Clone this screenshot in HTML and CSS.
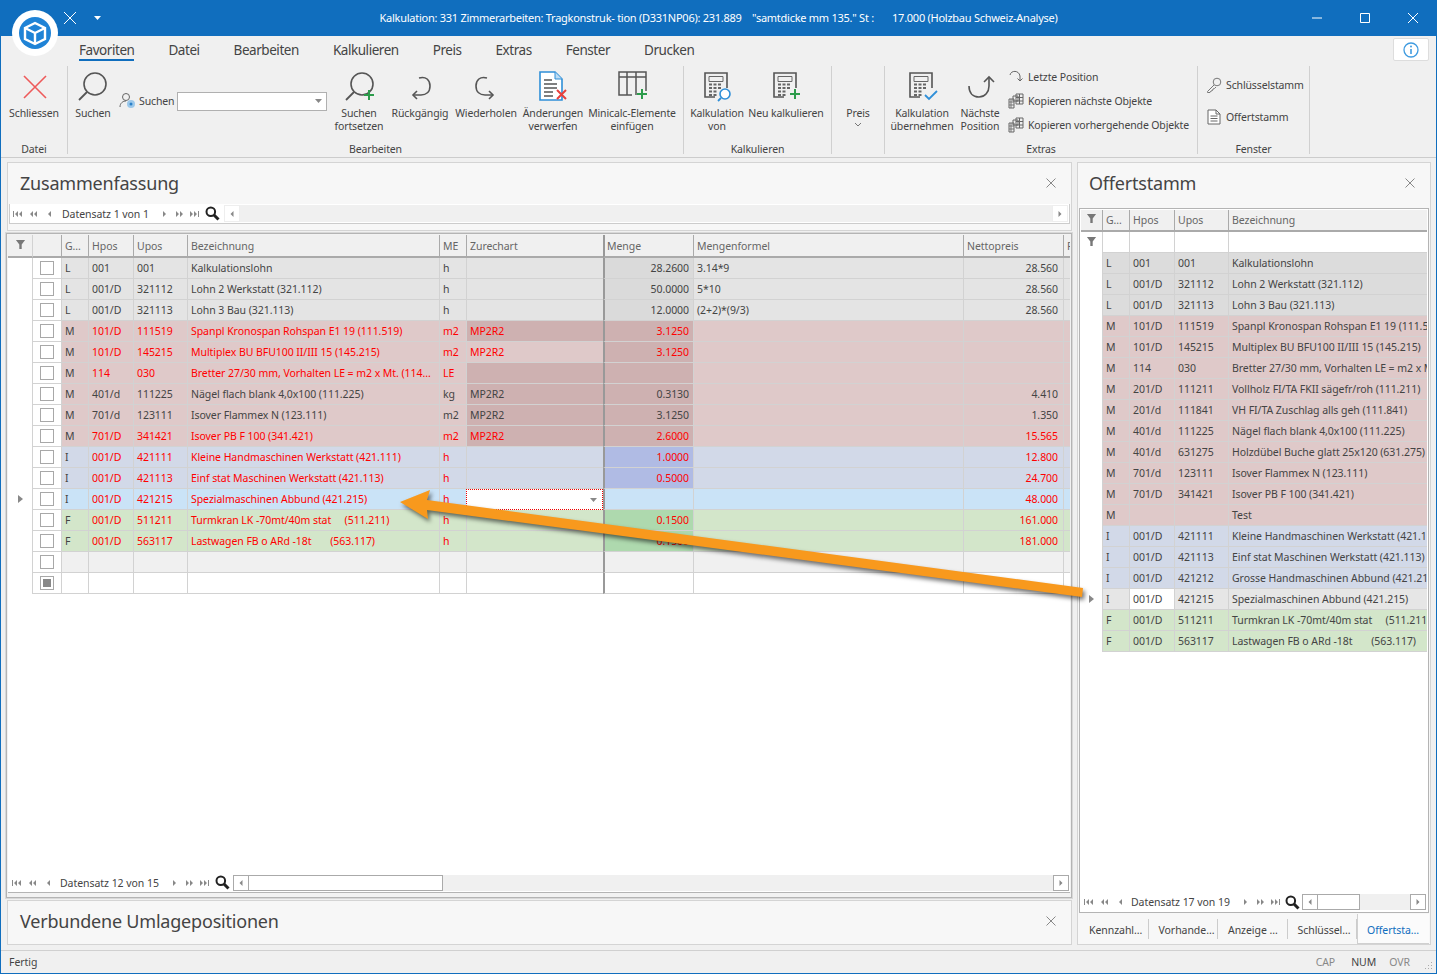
FILE: index.html
```html
<!DOCTYPE html>
<html lang="de">
  <head>
    <meta charset="UTF-8" />
    <meta name="viewport" content="width=device-width, initial-scale=1.0" />
    <title>Kalkulation</title>
    <link rel="stylesheet" href="styles.css">
  </head>

  <body>
    <svg class="defs" width="0" height="0">
      <symbol id="i-funnel" viewBox="0 0 12 12"><path d="M1 1h10L7.3 6v5H4.7V6z" fill="#777"/></symbol>
      <symbol id="i-first" viewBox="0 0 10 8"><path d="M1 1v6" stroke="#888" fill="none"/><path d="M5.5 1v6L2.5 4zM9.5 1v6L6.5 4z" fill="#888"/></symbol>
      <symbol id="i-prevp" viewBox="0 0 10 8"><path d="M4.5 1v6L1.5 4zM8.5 1v6L5.5 4z" fill="#888"/></symbol>
      <symbol id="i-prev" viewBox="0 0 10 8"><path d="M6.5 1v6L3.5 4z" fill="#888"/></symbol>
      <symbol id="i-next" viewBox="0 0 10 8"><path d="M3.5 1v6L6.5 4z" fill="#888"/></symbol>
      <symbol id="i-nextp" viewBox="0 0 10 8"><path d="M1.5 1v6L4.5 4zM5.5 1v6L8.5 4z" fill="#888"/></symbol>
      <symbol id="i-last" viewBox="0 0 10 8"><path d="M.5 1v6L3.5 4zM4.5 1v6L7.5 4z" fill="#888"/><path d="M9 1v6" stroke="#888" fill="none"/></symbol>
      <symbol id="i-mag" viewBox="0 0 15 15"><circle cx="5.8" cy="5.8" r="4.3" fill="none" stroke="#222" stroke-width="2"/><path d="M9 9l4.5 4.5" stroke="#222" stroke-width="3"/></symbol>
      <symbol id="i-calc" viewBox="0 0 32 32">
        <path d="M14 27H4V3h22v15" fill="none" stroke="#555" stroke-width="1.6"/>
        <path d="M8 6.5h14v5H8z" fill="none" stroke="#666"/>
        <path d="M8 14.5h3M12.5 14.5h3M17 14.5h3M8 18h3M12.5 18h3M17 18h3M8 21.5h3M12.5 21.5h3M8 25h3M12.5 25h3" stroke="#666" stroke-width="2"/>
      </symbol>
      <symbol id="i-undo" viewBox="0 0 32 32">
        <path d="M15 8c7-2 11 2 11 8 0 6-4 9-9 9H9" fill="none" stroke="#555" stroke-width="1.6"/>
        <path d="M13 21l-4 4 4 4" fill="none" stroke="#555" stroke-width="1.6"/>
      </symbol>
      <symbol id="i-copy" viewBox="0 0 16 16">
        <path d="M1 6h5v9H1zM5 3h5v5H5zM8 1h7v10H8z" fill="#eee" stroke="#666"/>
        <path d="M8 4.500h7M11.500 1v10M8 8h7" stroke="#666" fill="none"/>
        <path d="M3 6v9M1 9h5M1 12h5" stroke="#777" fill="none"/>
      </symbol>
    </svg>

    <div class="app">
      <header class="titlebar">
        <div class="qat">
          <svg width="14" height="14" viewBox="0 0 14 14"><path d="M1 1l12 12M13 1L1 13" stroke="#fff" fill="none"/></svg>
          <svg class="qat-drop" width="7" height="4" viewBox="0 0 7 4"><path d="M0 0h7L3.500 4z" fill="#fff"/></svg>
        </div>
        <div class="title">Kalkulation: 331 Zimmerarbeiten: Tragkonstruk- tion (D331NP06): 231.889    "samtdicke mm 135." St :       17.000 (Holzbau Schweiz-Analyse)</div>
        <div class="winbtns">
          <span class="winbtn"><svg width="12" height="12" viewBox="0 0 12 12"><path d="M1 6h10" stroke="#fff" fill="none"/></svg></span>
          <span class="winbtn"><svg width="12" height="12" viewBox="0 0 12 12"><path d="M1.500 1.500h9v9h-9z" stroke="#fff" fill="none"/></svg></span>
          <span class="winbtn"><svg width="12" height="12" viewBox="0 0 12 12"><path d="M1 1l10 10M11 1L1 11" stroke="#fff" fill="none"/></svg></span>
        </div>
      </header>

      <div class="logo">
        <svg width="46" height="46" viewBox="0 0 46 46">
          <circle cx="23" cy="23" r="23" fill="#fff"/>
          <circle cx="23" cy="23" r="16" fill="#1f83d6"/>
          <path d="M23 13l10 5v11l-10 5-10-5V18z" fill="none" stroke="#fff" stroke-width="2.400"/>
          <path d="M13 18l10 5 10-5M23 23v11" fill="none" stroke="#fff" stroke-width="2.400"/>
        </svg>
      </div>

      <nav class="tabs">
        <span class="tab active">Favoriten</span>
        <span class="tab">Datei</span>
        <span class="tab">Bearbeiten</span>
        <span class="tab">Kalkulieren</span>
        <span class="tab">Preis</span>
        <span class="tab">Extras</span>
        <span class="tab">Fenster</span>
        <span class="tab">Drucken</span>
        <span class="info">
          <svg width="16" height="16" viewBox="0 0 16 16"><circle cx="8" cy="8" r="7" fill="none" stroke="#3f9be0" stroke-width="1.300"/><path d="M8 7v5" stroke="#3f9be0" stroke-width="1.600"/><circle cx="8" cy="4.600" r="1" fill="#3f9be0"/></svg>
        </span>
      </nav>

      <div class="ribbon">
        <section class="group g-datei">
          <div class="items">
            <div class="rb w-66">
              <div class="rb-icon"><svg width="32" height="32" viewBox="0 0 32 32"><path d="M6 6l22 22M28 6L6 28" stroke="#ee5a5a" stroke-width="1.600" fill="none"/></svg></div>
              <div class="rb-label">Schliessen</div>
            </div>
          </div>
          <div class="group-name">Datei</div>
        </section>

        <section class="group g-bearb">
          <div class="items">
            <div class="rb w-50">
              <div class="rb-icon"><svg width="32" height="32" viewBox="0 0 32 32"><circle cx="18" cy="14" r="11" fill="none" stroke="#555" stroke-width="1.600"/><path d="M10 22l-8 8" stroke="#555" stroke-width="1.800"/></svg></div>
              <div class="rb-label">Suchen</div>
            </div>
            <div class="searchbox">
              <svg width="17" height="18" viewBox="0 0 17 18"><circle cx="7" cy="5" r="3.500" fill="none" stroke="#666"/><path d="M1 15c0-4 3-6 6-6" fill="none" stroke="#666"/><circle cx="12" cy="12" r="4" fill="#9cc8ea"/><circle cx="12" cy="12" r="1.500" fill="#2a80c8"/></svg>
              <span class="sb-label">Suchen</span>
              <span class="combo"><svg width="7" height="4" viewBox="0 0 7 4"><path d="M0 0h7L3.500 4z" fill="#888"/></svg></span>
            </div>
            <div class="rb w-58">
              <div class="rb-icon"><svg width="32" height="32" viewBox="0 0 32 32"><circle cx="19" cy="14" r="11" fill="none" stroke="#555" stroke-width="1.600"/><path d="M11 22l-8 8" stroke="#555" stroke-width="1.800"/><path d="M26 20v10M21 25h10" stroke="#2c9c4b" stroke-width="2"/></svg></div>
              <div class="rb-label">Suchen<br>fortsetzen</div>
            </div>
            <div class="rb w-64">
              <div class="rb-icon"><svg width="32" height="32"><use href="#i-undo"/></svg></div>
              <div class="rb-label">Rückgängig</div>
            </div>
            <div class="rb w-68">
              <div class="rb-icon"><svg class="flip" width="32" height="32"><use href="#i-undo"/></svg></div>
              <div class="rb-label">Wiederholen</div>
            </div>
            <div class="rb w-66">
              <div class="rb-icon"><svg width="32" height="32" viewBox="0 0 32 32"><path d="M3 2h15l7 7v21H3z" fill="#fff" stroke="#2f8fd8" stroke-width="1.600"/><path d="M18 2v7h7" fill="#bcdcf4" stroke="#2f8fd8"/><path d="M7 10h8M7 14h13M7 18h13M7 22h9M7 26h9" stroke="#555" stroke-width="1.300"/><path d="M20 20l9 9M29 20l-9 9" stroke="#e8403c" stroke-width="2"/></svg></div>
              <div class="rb-label">Änderungen<br>verwerfen</div>
            </div>
            <div class="rb w-92">
              <div class="rb-icon"><svg width="32" height="32" viewBox="0 0 32 32"><path d="M16 25H3V2h27v19" fill="none" stroke="#555" stroke-width="1.500"/><path d="M3 7h27M11 2v23M20 2v23" fill="none" stroke="#555" stroke-width="1.500"/><path d="M26 19v10M21 24h10" stroke="#2c9c4b" stroke-width="2"/></svg></div>
              <div class="rb-label">Minicalc-Elemente<br>einfügen</div>
            </div>
          </div>
          <div class="group-name">Bearbeiten</div>
        </section>

        <section class="group g-kalk">
          <div class="items">
            <div class="rb w-62">
              <div class="rb-icon"><svg width="32" height="32" viewBox="0 0 32 32"><use href="#i-calc"/><circle cx="24" cy="24" r="5" fill="#fff" stroke="#2f8fd8" stroke-width="1.600"/><path d="M20 28l-3 3" stroke="#2f8fd8" stroke-width="1.800"/></svg></div>
              <div class="rb-label">Kalkulation<br>von</div>
            </div>
            <div class="rb w-76">
              <div class="rb-icon"><svg width="32" height="32" viewBox="0 0 32 32"><use href="#i-calc"/><path d="M25 19v10M20 24h10" stroke="#2c9c4b" stroke-width="2"/></svg></div>
              <div class="rb-label">Neu kalkulieren</div>
            </div>
          </div>
          <div class="group-name">Kalkulieren</div>
        </section>

        <section class="group g-preis">
          <div class="items">
            <div class="rb w-52">
              <div class="rb-icon"></div>
              <div class="rb-label">Preis</div>
              <svg class="chev" width="8" height="5" viewBox="0 0 8 5"><path d="M1 1l3 3 3-3" fill="none" stroke="#777"/></svg>
            </div>
          </div>
        </section>

        <section class="group g-extras">
          <div class="items">
            <div class="rb w-64">
              <div class="rb-icon"><svg width="32" height="32" viewBox="0 0 32 32"><use href="#i-calc"/><path d="M19 25l4 4 8-8" fill="none" stroke="#2f8fd8" stroke-width="1.800"/></svg></div>
              <div class="rb-label">Kalkulation<br>übernehmen</div>
            </div>
            <div class="rb w-52">
              <div class="rb-icon"><svg width="32" height="32" viewBox="0 0 32 32"><path d="M5 16c0 7 4 11 10 11s10-5 10-11V7" fill="none" stroke="#555" stroke-width="1.600"/><path d="M20 12l5-5 5 5" fill="none" stroke="#555" stroke-width="1.600"/></svg></div>
              <div class="rb-label">Nächste<br>Position</div>
            </div>
            <div class="rb-list">
              <div class="rb-line"><svg width="16" height="16" viewBox="0 0 16 16"><path d="M2 6c1-5 9-5 10 1v5" fill="none" stroke="#666"/><path d="M9.500 9.500L12 12l2.500-2.500" fill="none" stroke="#666"/></svg>Letzte Position</div>
              <div class="rb-line"><svg width="16" height="16"><use href="#i-copy"/></svg>Kopieren nächste Objekte</div>
              <div class="rb-line"><svg width="16" height="16"><use href="#i-copy"/></svg>Kopieren vorhergehende Objekte</div>
            </div>
          </div>
          <div class="group-name">Extras</div>
        </section>

        <section class="group g-fenster">
          <div class="items">
            <div class="rb-list wide">
              <div class="rb-line"><svg width="16" height="16" viewBox="0 0 16 16"><circle cx="11" cy="5" r="3.800" fill="none" stroke="#777"/><path d="M8 8l-6.500 6.500v1h2.500l1-1.500 1.500-.5.500-1.500 1.500-.5 1.500-1.500" fill="none" stroke="#777"/></svg>Schlüsselstamm</div>
              <div class="rb-line"><svg width="16" height="16" viewBox="0 0 16 16"><path d="M2 1h8l4 4v10H2z" fill="#fff" stroke="#666"/><path d="M10 1v4h4M4.500 7h7M4.500 9.500h7M4.500 12h7" fill="none" stroke="#666"/></svg>Offertstamm</div>
            </div>
          </div>
          <div class="group-name">Fenster</div>
        </section>
      </div>

      <main class="main">
        <div class="col-left">
          <section class="panel panel-top">
            <div class="panel-head">
              <h2>Zusammenfassung</h2>
              <svg width="10" height="10" viewBox="0 0 10 10"><path d="M.5.500l9 9M9.500.500l-9 9" stroke="#888" fill="none"/></svg>
            </div>
            <div class="navbar nav-top">
              <span class="navbtns">
                <svg width="15" height="8"><use href="#i-first"/></svg><svg width="15" height="8"><use href="#i-prevp"/></svg><svg width="15" height="8"><use href="#i-prev"/></svg>
              </span>
              <span class="navtext">Datensatz 1 von 1</span>
              <span class="navbtns">
                <svg width="15" height="8"><use href="#i-next"/></svg><svg width="15" height="8"><use href="#i-nextp"/></svg><svg width="15" height="8"><use href="#i-last"/></svg>
              </span>
              <svg class="mag" width="15" height="15"><use href="#i-mag"/></svg>
              <span class="hscroll disabled"><span class="sbtn"><svg width="15" height="8"><use href="#i-prev"/></svg></span><span class="track"></span><span class="sbtn"><svg width="15" height="8"><use href="#i-next"/></svg></span></span>
            </div>
          </section>

          <section class="gridframe">
            <div class="gridwrap">
              <table class="grid grid-main">
                <colgroup>
                  <col class="c-ind"><col class="c-chk"><col class="c-g"><col class="c-hpos"><col class="c-upos"><col class="c-bez"><col class="c-me"><col class="c-zur"><col class="c-menge"><col class="c-formel"><col class="c-netto"><col class="c-p">
                </colgroup>
                <thead>
                  <tr>
                    <th class="ind"><svg width="11" height="11"><use href="#i-funnel"/></svg></th>
                    <th></th><th>G...</th><th>Hpos</th><th>Upos</th><th>Bezeichnung</th><th>ME</th><th>Zurechart</th><th class="mg">Menge</th><th>Mengenformel</th><th>Nettopreis</th><th>P</th>
                  </tr>
                </thead>
                <tbody>
                  <tr class="r-l"><td class="ind"></td><td class="chk"><i class="box"></i></td><td>L</td><td>001</td><td>001</td><td>Kalkulationslohn</td><td>h</td><td></td><td class="mg num hi">28.2600</td><td>3.14*9</td><td class="num2">28.560</td><td></td></tr>
                  <tr class="r-l"><td class="ind"></td><td class="chk"><i class="box"></i></td><td>L</td><td>001/D</td><td>321112</td><td>Lohn 2 Werkstatt (321.112)</td><td>h</td><td></td><td class="mg num hi">50.0000</td><td>5*10</td><td class="num2">28.560</td><td></td></tr>
                  <tr class="r-l"><td class="ind"></td><td class="chk"><i class="box"></i></td><td>L</td><td>001/D</td><td>321113</td><td>Lohn 3 Bau (321.113)</td><td>h</td><td></td><td class="mg num hi">12.0000</td><td>(2+2)*(9/3)</td><td class="num2">28.560</td><td></td></tr>
                  <tr class="r-m red"><td class="ind"></td><td class="chk"><i class="box"></i></td><td class="g">M</td><td>101/D</td><td>111519</td><td>Spanpl Kronospan Rohspan E1 19 (111.519)</td><td>m2</td><td class="hi">MP2R2</td><td class="mg num hi">3.1250</td><td></td><td class="num2"></td><td></td></tr>
                  <tr class="r-m red"><td class="ind"></td><td class="chk"><i class="box"></i></td><td class="g">M</td><td>101/D</td><td>145215</td><td>Multiplex BU BFU100 II/III 15 (145.215)</td><td>m2</td><td>MP2R2</td><td class="mg num hi">3.1250</td><td></td><td class="num2"></td><td></td></tr>
                  <tr class="r-m red"><td class="ind"></td><td class="chk"><i class="box"></i></td><td class="g">M</td><td>114</td><td>030</td><td>Bretter 27/30 mm, Vorhalten LE = m2 x Mt. (114...</td><td>LE</td><td class="hi"></td><td class="mg num hi"></td><td></td><td class="num2"></td><td></td></tr>
                  <tr class="r-m"><td class="ind"></td><td class="chk"><i class="box"></i></td><td>M</td><td>401/d</td><td>111225</td><td>Nägel flach blank 4,0x100 (111.225)</td><td>kg</td><td class="hi">MP2R2</td><td class="mg num hi">0.3130</td><td></td><td class="num2">4.410</td><td></td></tr>
                  <tr class="r-m"><td class="ind"></td><td class="chk"><i class="box"></i></td><td>M</td><td>701/d</td><td>123111</td><td>Isover Flammex N (123.111)</td><td>m2</td><td class="hi">MP2R2</td><td class="mg num hi">3.1250</td><td></td><td class="num2">1.350</td><td></td></tr>
                  <tr class="r-m red"><td class="ind"></td><td class="chk"><i class="box"></i></td><td class="g">M</td><td>701/D</td><td>341421</td><td>Isover PB F 100 (341.421)</td><td>m2</td><td class="hi">MP2R2</td><td class="mg num hi">2.6000</td><td></td><td class="num2">15.565</td><td></td></tr>
                  <tr class="r-i red"><td class="ind"></td><td class="chk"><i class="box"></i></td><td class="g">I</td><td>001/D</td><td>421111</td><td>Kleine Handmaschinen Werkstatt (421.111)</td><td>h</td><td></td><td class="mg num hi">1.0000</td><td></td><td class="num2">12.800</td><td></td></tr>
                  <tr class="r-i red"><td class="ind"></td><td class="chk"><i class="box"></i></td><td class="g">I</td><td>001/D</td><td>421113</td><td>Einf stat Maschinen Werkstatt (421.113)</td><td>h</td><td></td><td class="mg num hi">0.5000</td><td></td><td class="num2">24.700</td><td></td></tr>
                  <tr class="r-s red"><td class="ind"><i class="cursor"></i></td><td class="chk"><i class="box"></i></td><td class="g">I</td><td>001/D</td><td>421215</td><td>Spezialmaschinen Abbund (421.215)</td><td>h</td><td class="editor"><svg width="7" height="4" viewBox="0 0 7 4"><path d="M0 0h7L3.500 4z" fill="#888"/></svg></td><td class="mg num"></td><td></td><td class="num2">48.000</td><td></td></tr>
                  <tr class="r-f red"><td class="ind"></td><td class="chk"><i class="box"></i></td><td class="g">F</td><td>001/D</td><td>511211</td><td>Turmkran LK -70mt/40m stat     (511.211)</td><td>h</td><td></td><td class="mg num hi">0.1500</td><td></td><td class="num2">161.000</td><td></td></tr>
                  <tr class="r-f red"><td class="ind"></td><td class="chk"><i class="box"></i></td><td class="g">F</td><td>001/D</td><td>563117</td><td>Lastwagen FB o ARd -18t       (563.117)</td><td>h</td><td></td><td class="mg num hi">0.1500</td><td></td><td class="num2">181.000</td><td></td></tr>
                  <tr class="r-e"><td class="ind"></td><td class="chk"><i class="box"></i></td><td></td><td></td><td></td><td></td><td></td><td></td><td class="mg"></td><td></td><td></td><td></td></tr>
                  <tr class="r-w"><td class="ind"></td><td class="chk"><i class="box mixed"></i></td><td></td><td></td><td></td><td></td><td></td><td></td><td class="mg"></td><td></td><td></td><td></td></tr>
                </tbody>
              </table>
            </div>
            <div class="navbar nav-bottom">
              <span class="navbtns">
                <svg width="15" height="8"><use href="#i-first"/></svg><svg width="15" height="8"><use href="#i-prevp"/></svg><svg width="15" height="8"><use href="#i-prev"/></svg>
              </span>
              <span class="navtext">Datensatz 12 von 15</span>
              <span class="navbtns">
                <svg width="15" height="8"><use href="#i-next"/></svg><svg width="15" height="8"><use href="#i-nextp"/></svg><svg width="15" height="8"><use href="#i-last"/></svg>
              </span>
              <svg class="mag" width="15" height="15"><use href="#i-mag"/></svg>
              <span class="hscroll"><span class="sbtn"><svg width="15" height="8"><use href="#i-prev"/></svg></span><span class="thumb thumb-main"></span><span class="track"></span><span class="sbtn"><svg width="15" height="8"><use href="#i-next"/></svg></span></span>
            </div>
          </section>

          <section class="panel panel-umlage">
            <div class="panel-head">
              <h2>Verbundene Umlagepositionen</h2>
              <svg width="10" height="10" viewBox="0 0 10 10"><path d="M.5.500l9 9M9.500.500l-9 9" stroke="#888" fill="none"/></svg>
            </div>
          </section>
        </div>

        <section class="panel col-right">
          <div class="panel-head">
            <h2>Offertstamm</h2>
            <svg width="10" height="10" viewBox="0 0 10 10"><path d="M.5.500l9 9M9.500.500l-9 9" stroke="#888" fill="none"/></svg>
          </div>
          <div class="gridframe frame-right">
            <div class="gridwrap">
              <table class="grid grid-side">
                <colgroup>
                  <col class="s-ind"><col class="c-g"><col class="c-hpos"><col class="c-upos"><col class="s-bez">
                </colgroup>
                <thead>
                  <tr><th class="ind"><svg width="11" height="11"><use href="#i-funnel"/></svg></th><th>G...</th><th>Hpos</th><th>Upos</th><th>Bezeichnung</th></tr>
                </thead>
                <tbody>
                  <tr class="r-w"><td class="ind"><svg width="11" height="11"><use href="#i-funnel"/></svg></td><td></td><td></td><td></td><td></td></tr>
                  <tr class="r-l2"><td class="ind"></td><td>L</td><td>001</td><td>001</td><td>Kalkulationslohn</td></tr>
                  <tr class="r-l2"><td class="ind"></td><td>L</td><td>001/D</td><td>321112</td><td>Lohn 2 Werkstatt (321.112)</td></tr>
                  <tr class="r-l2"><td class="ind"></td><td>L</td><td>001/D</td><td>321113</td><td>Lohn 3 Bau (321.113)</td></tr>
                  <tr class="r-m"><td class="ind"></td><td>M</td><td>101/D</td><td>111519</td><td>Spanpl Kronospan Rohspan E1 19 (111.519)</td></tr>
                  <tr class="r-m"><td class="ind"></td><td>M</td><td>101/D</td><td>145215</td><td>Multiplex BU BFU100 II/III 15 (145.215)</td></tr>
                  <tr class="r-m"><td class="ind"></td><td>M</td><td>114</td><td>030</td><td>Bretter 27/30 mm, Vorhalten LE = m2 x Mt.</td></tr>
                  <tr class="r-m"><td class="ind"></td><td>M</td><td>201/D</td><td>111211</td><td>Vollholz FI/TA FKII sägefr/roh (111.211)</td></tr>
                  <tr class="r-m"><td class="ind"></td><td>M</td><td>201/d</td><td>111841</td><td>VH FI/TA Zuschlag alls geh (111.841)</td></tr>
                  <tr class="r-m"><td class="ind"></td><td>M</td><td>401/d</td><td>111225</td><td>Nägel flach blank 4,0x100 (111.225)</td></tr>
                  <tr class="r-m"><td class="ind"></td><td>M</td><td>401/d</td><td>631275</td><td>Holzdübel Buche glatt 25x120 (631.275)</td></tr>
                  <tr class="r-m"><td class="ind"></td><td>M</td><td>701/d</td><td>123111</td><td>Isover Flammex N (123.111)</td></tr>
                  <tr class="r-m"><td class="ind"></td><td>M</td><td>701/D</td><td>341421</td><td>Isover PB F 100 (341.421)</td></tr>
                  <tr class="r-m"><td class="ind"></td><td>M</td><td></td><td></td><td>Test</td></tr>
                  <tr class="r-i"><td class="ind"></td><td>I</td><td>001/D</td><td>421111</td><td>Kleine Handmaschinen Werkstatt (421.111)</td></tr>
                  <tr class="r-i"><td class="ind"></td><td>I</td><td>001/D</td><td>421113</td><td>Einf stat Maschinen Werkstatt (421.113)</td></tr>
                  <tr class="r-i"><td class="ind"></td><td>I</td><td>001/D</td><td>421212</td><td>Grosse Handmaschinen Abbund (421.212)</td></tr>
                  <tr class="r-cur"><td class="ind"><i class="cursor"></i></td><td>I</td><td class="focus">001/D</td><td>421215</td><td>Spezialmaschinen Abbund (421.215)</td></tr>
                  <tr class="r-f"><td class="ind"></td><td>F</td><td>001/D</td><td>511211</td><td>Turmkran LK -70mt/40m stat     (511.211)</td></tr>
                  <tr class="r-f"><td class="ind"></td><td>F</td><td>001/D</td><td>563117</td><td>Lastwagen FB o ARd -18t       (563.117)</td></tr>
                </tbody>
              </table>
            </div>
            <div class="navbar nav-side">
              <span class="navbtns">
                <svg width="15" height="8"><use href="#i-first"/></svg><svg width="15" height="8"><use href="#i-prevp"/></svg><svg width="15" height="8"><use href="#i-prev"/></svg>
              </span>
              <span class="navtext">Datensatz 17 von 19</span>
              <span class="navbtns">
                <svg width="15" height="8"><use href="#i-next"/></svg><svg width="15" height="8"><use href="#i-nextp"/></svg><svg width="15" height="8"><use href="#i-last"/></svg>
              </span>
              <svg class="mag" width="15" height="15"><use href="#i-mag"/></svg>
              <span class="hscroll"><span class="sbtn"><svg width="15" height="8"><use href="#i-prev"/></svg></span><span class="thumb thumb-side"></span><span class="track"></span><span class="sbtn"><svg width="15" height="8"><use href="#i-next"/></svg></span></span>
            </div>
          </div>
          <div class="doctabs">
            <span class="doctab">Kennzahl...</span>
            <span class="doctab">Vorhande...</span>
            <span class="doctab">Anzeige ...</span>
            <span class="doctab">Schlüssel...</span>
            <span class="doctab on">Offertsta...</span>
          </div>
        </section>
      </main>

      <footer class="status">
        <span class="st-text">Fertig</span>
        <span class="st-key off">CAP</span>
        <span class="st-key">NUM</span>
        <span class="st-key off">OVR</span>
        <svg class="grip" width="9" height="9" viewBox="0 0 9 9"><path d="M7 1h1v1H7zM4 4h1v1H4zM7 4h1v1H7zM1 7h1v1H1zM4 7h1v1H4zM7 7h1v1H7z" fill="#aaa"/></svg>
      </footer>

      <svg class="callout" width="1437" height="974" viewBox="0 0 1437 974">
        <path d="M400 502L430 490 427 500 1083 588 1082 597 427 510 428 519z" fill="#f8991d"/>
      </svg>
    </div>
  </body>
</html>
```

FILE: styles.css
```css
* {
  box-sizing: border-box;
  margin: 0;
  padding: 0;
}

html,
body {
  height: 100%;
  overflow: hidden;
}

body {
  font-family: "Noto Sans", sans-serif;
  font-size: 10.5px;
  letter-spacing: -0.05px;
  color: #444;
  background: #f0f0f0;
}

.defs {
  position: absolute;
}

.app {
  position: relative;
  display: flex;
  flex-direction: column;
  height: 100vh;
  border: 1px solid #106ebe;
  border-top: none;
  background: #f0f0f0;
}

/* title bar */
.titlebar {
  display: grid;
  grid-template-columns: 1fr auto 1fr;
  align-items: center;
  height: 36px;
  flex: none;
  background: #106ebe;
  color: #fff;
}

.qat {
  display: flex;
  align-items: center;
  padding-left: 62px;
}

.qat-drop {
  margin-left: 17px;
}

.title {
  padding-bottom: 1px;
  white-space: pre;
  font-size: 11px;
  letter-spacing: -0.26px;
}

.winbtns {
  display: flex;
  justify-content: flex-end;
  margin-right: -1px;
}

.winbtn {
  display: flex;
  justify-content: center;
  width: 48px;
}

.logo {
  position: absolute;
  left: 11px;
  top: 10px;
  height: 46px;
}

/* ribbon */
.tabs {
  display: flex;
  align-items: center;
  gap: 34px;
  height: 29px;
  flex: none;
  padding: 0 7px 2px 78px;
  font-size: 13.5px;
  letter-spacing: -0.45px;
}

.tab {
  position: relative;
}

.tab.active::after {
  content: "";
  position: absolute;
  left: 0;
  right: 0;
  bottom: -2px;
  height: 2px;
  background: #106ebe;
}

.info {
  display: flex;
  align-items: center;
  justify-content: center;
  width: 36px;
  height: 23px;
  margin-left: auto;
  background: #fff;
  border: 1px solid #ddd;
  border-radius: 2px;
}

.ribbon {
  display: flex;
  height: 93px;
  flex: none;
  padding-top: 1px;
  letter-spacing: -0.13px;
  border-bottom: 1px solid #ccc;
}

.group {
  display: flex;
  flex-direction: column;
  height: 88px;
  border-right: 1px solid #d0d0d0;
}

.g-datei { width: 67px; }
.g-bearb { width: 616px; }
.g-kalk { width: 148px; }
.g-preis { width: 53px; }
.g-extras { width: 313px; }
.g-fenster { width: 112px; }

.items {
  display: flex;
  flex: 1;
  padding-top: 2px;
}

.g-kalk .items { padding-left: 2px; }
.g-extras .items { padding-left: 5px; }

.group-name {
  height: 14px;
  margin-bottom: -2px;
  line-height: 14px;
  text-align: center;
}

.rb {
  display: flex;
  flex-direction: column;
  align-items: center;
  flex: none;
  text-align: center;
  white-space: nowrap;
}

.w-50 { width: 50px; }
.w-52 { width: 52px; }
.w-58 { width: 58px; }
.w-62 { width: 62px; }
.w-64 { width: 64px; }
.w-66 { width: 66px; }
.w-68 { width: 68px; }
.w-76 { width: 76px; }
.w-92 { width: 92px; }

.rb-icon {
  height: 39px;
  padding-top: 2px;
}

.rb-label {
  line-height: 13px;
}

.chev {
  margin-top: 2px;
}

.flip {
  transform: scaleX(-1);
}

.searchbox {
  display: flex;
  align-items: center;
  flex: none;
  width: 212px;
  height: 20px;
  margin-top: 23px;
  padding-left: 1px;
}

.sb-label {
  width: 36px;
  margin: 0 2px 0 3px;
}

.combo {
  display: flex;
  align-items: center;
  justify-content: flex-end;
  width: 150px;
  height: 19px;
  padding-right: 4px;
  background: #fff;
  border: 1px solid #b0b0b0;
}

.rb-list {
  display: flex;
  flex-direction: column;
  gap: 8px;
  margin-top: 1px;
  margin-left: 2px;
  white-space: nowrap;
}

.rb-line {
  display: flex;
  align-items: center;
  gap: 4px;
  height: 16px;
}

.rb-list.wide {
  gap: 16px;
  margin-top: 9px;
  margin-left: 8px;
}

/* panels */
.main {
  display: flex;
  flex: 1;
  gap: 5px;
  min-height: 0;
  padding: 4px 5px 5px;
}

.col-left {
  display: flex;
  flex-direction: column;
  width: 1066px;
  flex: none;
}

.panel {
  background: #f7f7f7;
  border: 1px solid #d4d4d4;
}

.panel-top {
  height: 69px;
  margin-left: 1px;
  flex: none;
}

.panel-umlage {
  height: 45px;
  margin-left: 1px;
  flex: none;
}

.panel-head {
  display: flex;
  align-items: center;
  justify-content: space-between;
  height: 41px;
  padding: 0 15px 2px 12px;
}

.col-right .panel-head {
  padding-left: 11px;
}

.panel-head h2 {
  font-size: 18px;
  line-height: 22px;
  font-weight: 400;
  letter-spacing: -0.2px;
  color: #444;
}

.gridframe {
  display: flex;
  flex-direction: column;
  flex: 1;
  min-height: 0;
  margin: 2px 0;
  padding: 1px;
  background: #f2f2f2;
  border: 1px solid #b4b4b4;
  outline: 1px solid #d8d8d8;
}

.gridwrap {
  flex: 1;
  min-height: 0;
  overflow: hidden;
  background: #fff;
}

/* grids */
.grid {
  table-layout: fixed;
  border-collapse: separate;
  border-spacing: 0;
  white-space: pre;
  line-height: 13px;
}

.grid-main { width: 1121px; }
.grid-side { width: 347px; }

.c-ind { width: 24px; }
.c-chk { width: 29px; }
.c-g { width: 27px; }
.c-hpos { width: 45px; }
.c-upos { width: 54px; }
.c-bez { width: 252px; }
.c-me { width: 27px; }
.c-zur { width: 137px; }
.c-menge { width: 90px; }
.c-formel { width: 270px; }
.c-netto { width: 100px; }
.c-p { width: 66px; }
.s-ind { width: 21px; }
.s-bez { width: 200px; }

.grid th,
.grid td {
  height: 21px;
  padding: 0 4px 0 3px;
  overflow: hidden;
  text-align: left;
  font-weight: 400;
  border-left: 1px solid #d2d2d2;
  border-bottom: 1px solid #d2d2d2;
}

.grid th {
  height: 23px;
  padding-top: 1px;
  color: #666;
  background: #f0f0f0;
  border-left-color: #aaa;
  border-bottom: 2px solid #aaa;
}

.grid th:nth-child(2) {
  border-left-color: #d2d2d2;
}

.grid .ind {
  padding: 0;
  text-align: center;
  background: #fff;
  border: none;
}

.grid th.ind {
  background: #f0f0f0;
  border-bottom: 2px solid #aaa;
}

.grid-side th {
  height: 22px;
}

.grid-side th:nth-child(2) {
  border-left-color: #aaa;
}

.grid .chk {
  padding: 0;
  text-align: center;
  background: #fff;
}

.box {
  display: block;
  width: 14px;
  height: 14px;
  margin: 0 auto;
  background: #fff;
  border: 1px solid #a8a8a8;
}

.box.mixed {
  background: #888;
  box-shadow: inset 0 0 0 2px #fff;
}

.cursor {
  display: inline-block;
  border-left: 5px solid #888;
  border-top: 4px solid transparent;
  border-bottom: 4px solid transparent;
}

.grid .mg,
.grid th.mg {
  padding-left: 2px;
  border-left: 2px solid #999;
}

.grid .num {
  padding-right: 4px;
  text-align: right;
}

.grid .num2 {
  padding-right: 5px;
  text-align: right;
}

.r-l td { background: #e4e4e4; }
.r-l td.hi { background: #dadada; }
.r-l2 td { background: #dcdcdc; }
.r-m td { background: #dfc9c9; }
.r-m td.hi { background: #ceb1b1; }
.r-i td { background: #d2d9e8; }
.r-i td.hi { background: #b0bbe4; }
.r-s td { background: #cae3f7; }
.r-cur td { background: #e6e6e6; }
.r-f td { background: #d3e6ca; }
.r-f td.hi { background: #aed9ae; }
.r-e td { background: #f0f0f0; }
.r-w td { background: #fff; }

.grid td.focus {
  background: #fff;
}

.red td {
  color: #f00;
}

.red td.g {
  color: #444;
}

.r-s td.editor {
  padding-right: 5px;
  line-height: 0;
  text-align: right;
  vertical-align: middle;
  background: #fff;
  border: 1px dotted #e00;
}

/* record navigators */
.navbar {
  display: flex;
  align-items: center;
  flex: none;
  background: #fff;
}

.nav-top {
  height: 20px;
  margin: 0 1px;
  border: 1px solid #ccc;
  border-top: none;
}

.nav-bottom {
  height: 20px;
  padding-left: 1px;
  margin-bottom: 3px;
  border-bottom: 1px solid #b4b4b4;
}

.nav-side {
  height: 20px;
}

.navbtns {
  display: flex;
  gap: 1px;
  flex: none;
}

.navtext + .navbtns {
  gap: 0;
}

.navtext {
  flex: none;
  white-space: nowrap;
}

.nav-top .navtext {
  width: 95px;
  margin-left: 5px;
}

.nav-bottom .navtext {
  width: 107px;
  margin-left: 4px;
}

.nav-side .navtext {
  width: 107px;
  margin-left: 3px;
}

.mag {
  flex: none;
  margin-left: 3px;
}

.nav-side .mag {
  margin-left: 2px;
}

.hscroll {
  display: flex;
  flex: 1;
  height: 16px;
  margin: 0 1px 0 3px;
  background: #f0f0f0;
}

.nav-top .hscroll {
  margin-left: 4px;
}

.nav-side .hscroll {
  margin-left: 2px;
}

.hscroll.disabled {
  height: 17px;
}

.sbtn {
  display: flex;
  align-items: center;
  justify-content: center;
  width: 16px;
  flex: none;
  background: #fff;
  border: 1px solid #aaa;
}

.disabled .sbtn {
  border-color: #eee;
}

.thumb {
  flex: none;
  background: #fff;
  border: 1px solid #aaa;
  border-left: none;
}

.thumb-main { width: 194px; }
.thumb-side { width: 42px; }

.track {
  flex: 1;
}

/* right column */
.col-right {
  display: flex;
  flex-direction: column;
  flex: 1;
  min-width: 0;
  height: 783px;
}

.frame-right {
  margin: 4px 1px 0;
  padding-bottom: 0;
  background: #fff;
  outline: none;
}

.doctabs {
  display: flex;
  align-items: stretch;
  height: 30px;
  flex: none;
  margin-top: 1px;
  padding: 0 1px;
}

.doctab {
  display: flex;
  align-items: center;
  flex: 1;
  padding: 2px 0 0 10px;
  white-space: nowrap;
  background-image: linear-gradient(#ccc, #ccc);
  background-size: 1px 20px;
  background-position: right center;
  background-repeat: no-repeat;
}

.doctab.on {
  flex: none;
  width: 72px;
  padding-left: 9px;
  color: #106ebe;
  background: #fbfbfb;
  border: 1px solid #d0d0d0;
  border-top: none;
  border-right: none;
}

/* status bar */
.status {
  display: flex;
  align-items: center;
  gap: 16px;
  height: 23px;
  flex: none;
  padding: 0 3px 0 8px;
  border-top: 1px solid #d0d0d0;
}

.st-text {
  margin-right: auto;
}

.st-key.off {
  color: #888;
}

.st-key + .st-key.off {
  margin-left: -3px;
}

.grip {
  margin-top: 6px;
  margin-left: -2px;
}

/* arrow drawn over the grid */
.callout {
  position: absolute;
  left: -1px;
  top: 0;
  pointer-events: none;
  filter: drop-shadow(2px 3px 2px rgba(0, 0, 0, 0.55));
}
```
